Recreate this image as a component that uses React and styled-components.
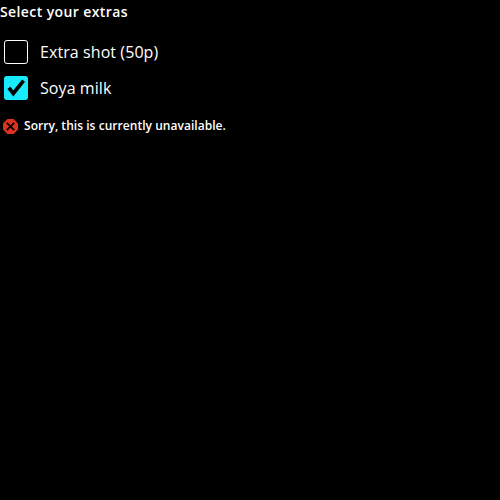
import React from "react";
import styled, { createGlobalStyle } from "styled-components";

const GlobalStyle = createGlobalStyle`
  * { box-sizing: border-box; }
  body {
    margin: 0;
    background: #000;
    color: #fff;
    font-family: "Open Sans", sans-serif;
  }
`;

const Fieldset = styled.fieldset`
  display: flex;
  flex-direction: column;
  margin: 0;
  padding: 0;
  border: 0;
`;

const Legend = styled.legend`
  padding: 0;
  font-size: 14px;
  font-weight: 600;
  line-height: 24px;
  letter-spacing: 0.4px;
`;

const Options = styled.div`
  display: flex;
  flex-direction: column;
  gap: 12px;
  padding: 16px 0 0 4px;
`;

const Option = styled.label`
  display: flex;
  align-items: center;
  gap: 12px;
  height: 24px;
  font-size: 16px;
  line-height: 24px;
  letter-spacing: 0.08px;
`;

const Box = styled.span`
  display: flex;
  width: 24px;
  height: 24px;
  border-radius: 3px;
  border: ${(p) => (p.$checked ? "0" : "1px solid #fff")};
  background: ${(p) => (p.$checked ? "#19ebff" : "transparent")};
`;

const Check = styled.svg`
  width: 24px;
  height: 24px;
`;

const ErrorMessage = styled.div`
  display: flex;
  align-items: center;
  gap: 6px;
  padding: 16px 0 0 3px;
  font-size: 12px;
  font-weight: 600;
  line-height: 20px;
  letter-spacing: 0.04px;
`;

const ErrorIcon = styled.svg`
  width: 15px;
  height: 15px;
`;

const extras = [
  { label: "Extra shot (50p)", checked: false },
  { label: "Soya milk", checked: true },
];

export default function App() {
  return (
    <>
      <GlobalStyle />
      <Fieldset>
        <Legend>Select your extras</Legend>
        <Options>
          {extras.map(({ label, checked }) => (
            <Option key={label}>
              <Box $checked={checked}>
                {checked && (
                  <Check viewBox="0 0 24 24">
                    <path d="M3.4 13L6.4 10.6L9.2 14.6L18.1 3.4L21 5.8L9.3 20.4Z" fill="#000" />
                  </Check>
                )}
              </Box>
              {label}
            </Option>
          ))}
        </Options>
        <ErrorMessage>
          <ErrorIcon viewBox="0 0 15 15">
            <path d="M4.4 0h6.2L15 4.4v6.2L10.6 15H4.4L0 10.6V4.4z" fill="#db3320" />
            <path d="M3.8 3.8l7.4 7.4M11.2 3.8l-7.4 7.4" stroke="#000" strokeWidth="1.8" />
          </ErrorIcon>
          Sorry, this is currently unavailable.
        </ErrorMessage>
      </Fieldset>
    </>
  );
}
